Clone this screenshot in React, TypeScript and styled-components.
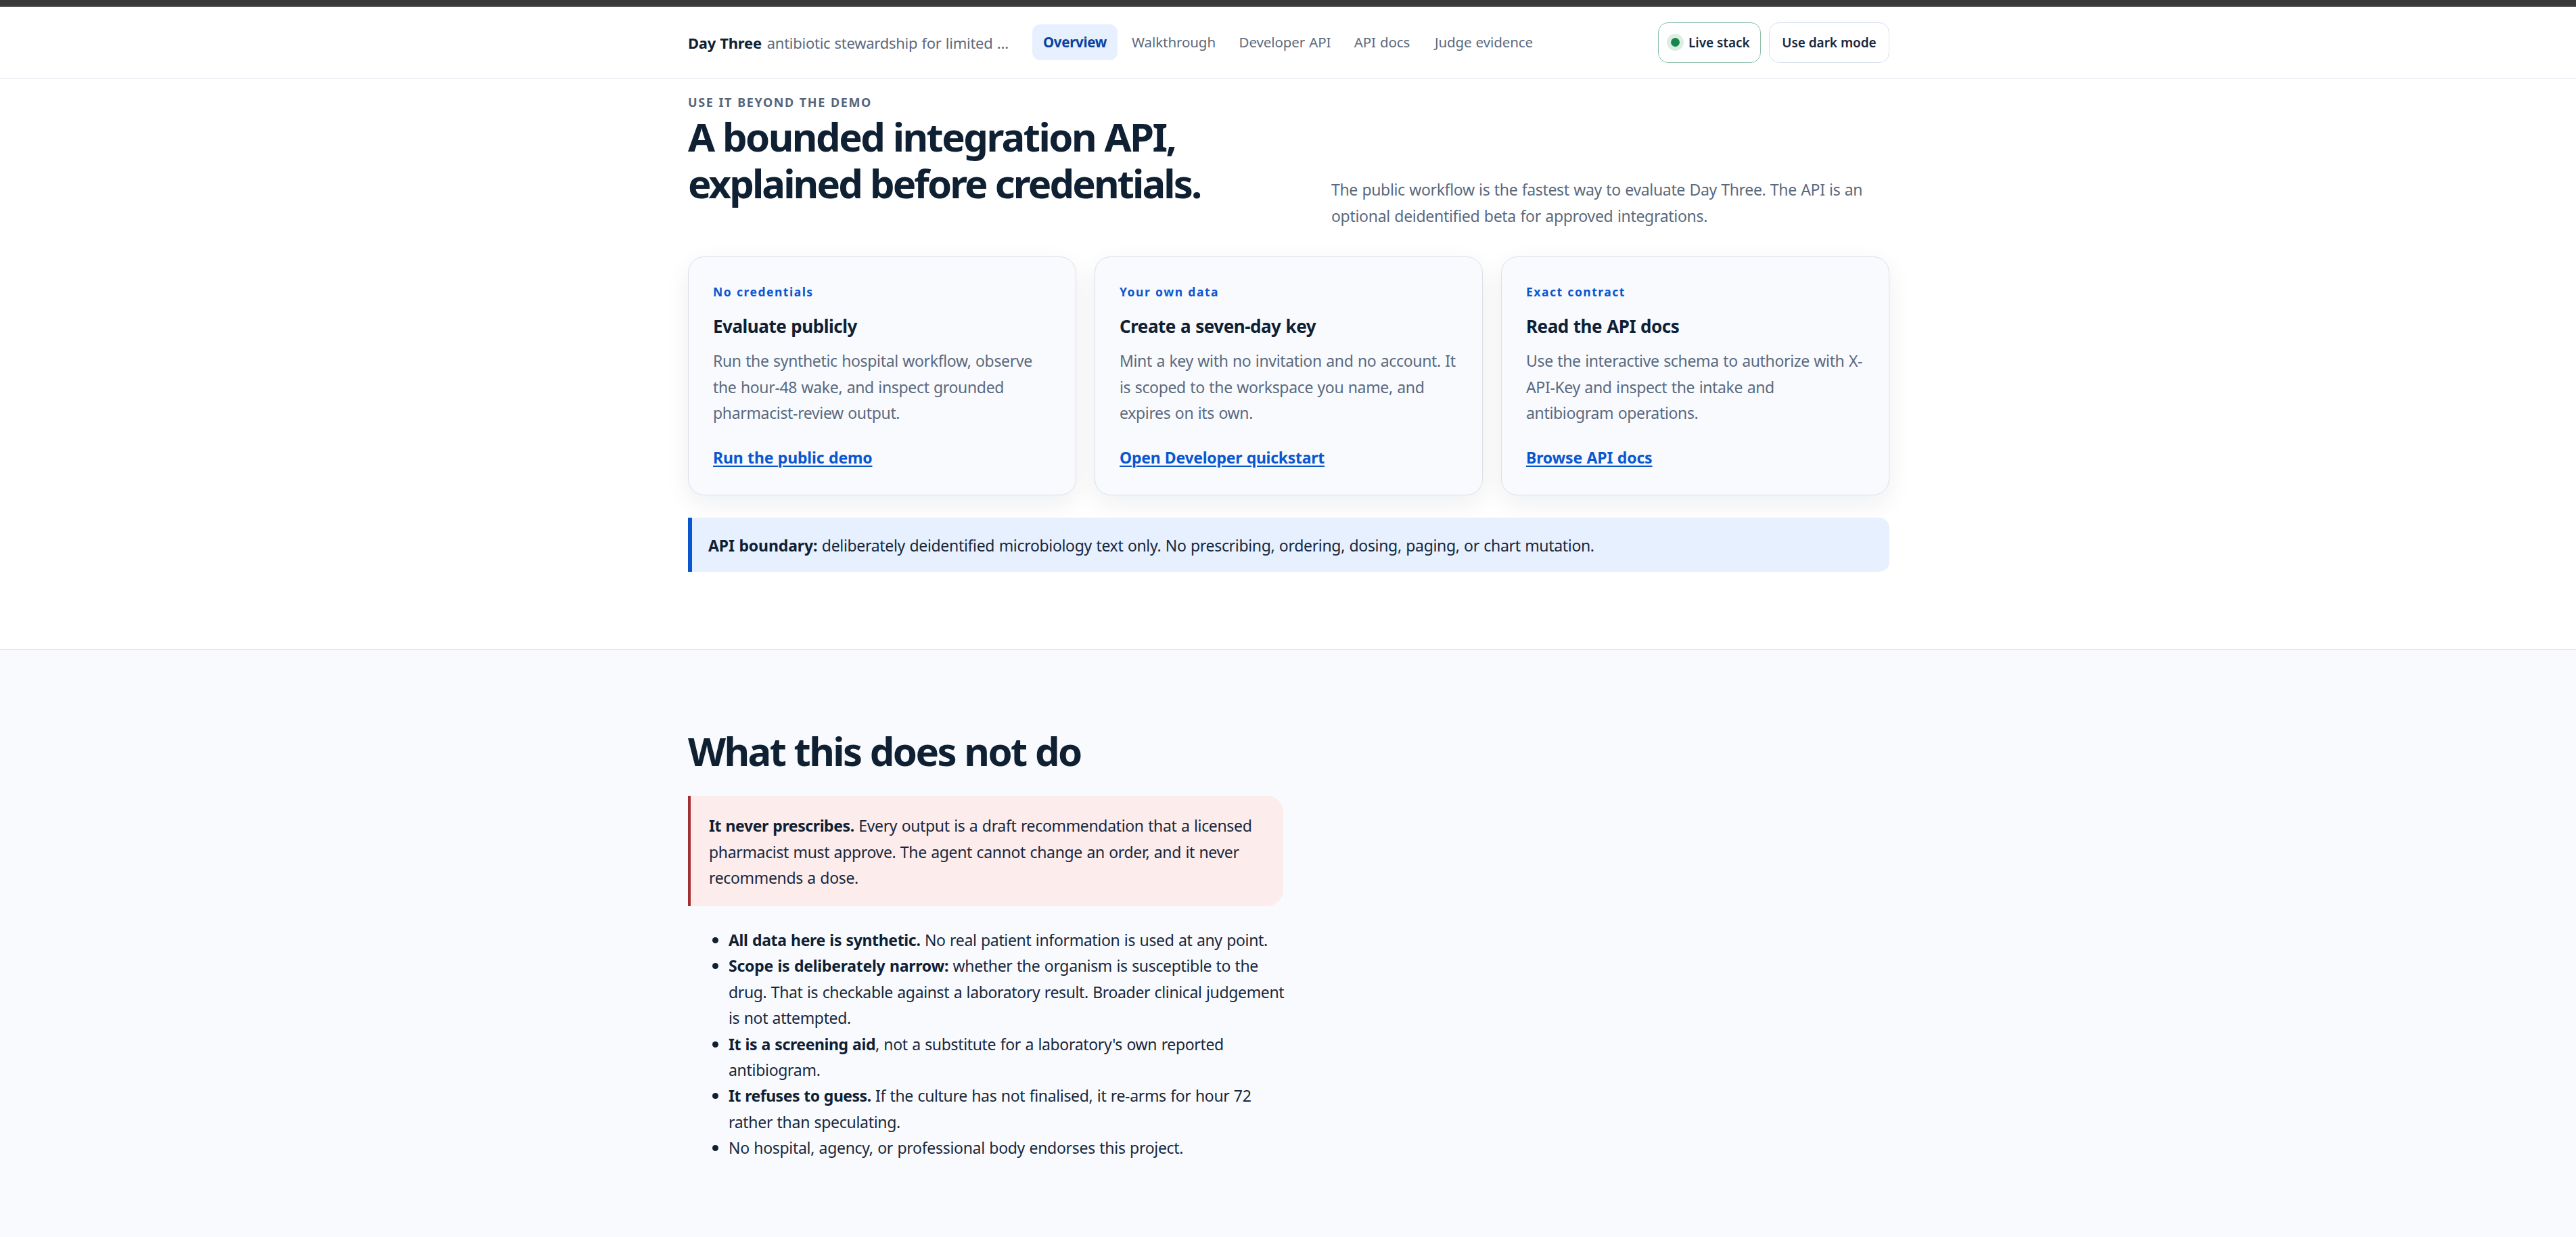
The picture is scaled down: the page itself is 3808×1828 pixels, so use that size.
import React from "react";
import styled, { createGlobalStyle } from "styled-components";

const ink = "#0f2033";
const body = "#17273b";
const muted = "#5a697d";
const blue = "#0a56cf";
const line = "#d9e0ea";
const tint = "#f8fafe";

const GlobalStyle = createGlobalStyle`
  * { box-sizing: border-box; }
  html, body { margin: 0; padding: 0; background: #fff; overflow: hidden; }
  body {
    font-family: "Noto Sans", "Open Sans", sans-serif;
    font-size: 23px;
    line-height: 38.4px;
    word-spacing: 0.8px;
    color: ${body};
  }
  h2, h3, p, ul { margin: 0; padding: 0; }
`;

const Page = styled.div`
  display: flex;
  flex-direction: column;
  height: 1828px;
  overflow: hidden;
`;

const TopStrip = styled.div`
  flex: none;
  height: 10px;
  background: #3a3a3a;
  border-bottom: 2px solid #444;
`;

const Header = styled.header`
  flex: none;
  height: 106px;
  background: #fff;
  border-bottom: 1px solid ${line};
`;

const Wrap = styled.div`
  width: 1776px;
  margin: 0 auto;
  position: relative;
  left: 1px;
`;

const HeaderRow = styled(Wrap)`
  height: 105px;
  display: flex;
  align-items: center;
`;

const Brand = styled.div`
  width: 476px;
  margin-right: 33px;
  padding-top: 1px;
  display: flex;
  gap: 8px;
  font-size: 22px;
  color: ${muted};
  white-space: nowrap;
`;

const Run = styled.span<{ $ls?: number }>`
  letter-spacing: ${(p) => p.$ls ?? -0.34}px;
`;

const Strong = styled.strong<{ $ls?: number }>`
  font-weight: 700;
  color: ${ink};
  letter-spacing: ${(p) => p.$ls ?? -0.4}px;
`;

const Nav = styled.nav`
  display: flex;
  gap: 6px;
`;

const NavLink = styled.a<{ $active?: boolean; $w: number; $ls?: number }>`
  width: ${(p) => p.$w}px;
  height: 53px;
  display: flex;
  align-items: center;
  justify-content: center;
  border-radius: 12px;
  font-size: 20.5px;
  white-space: nowrap;
  letter-spacing: ${(p) => p.$ls ?? -0.08}px;
  font-weight: ${(p) => (p.$active ? 700 : 400)};
  color: ${(p) => (p.$active ? "#0842a0" : muted)};
  background: ${(p) => (p.$active ? "#e6f0ff" : "transparent")};
`;

const Actions = styled.div`
  margin-left: auto;
  display: flex;
  gap: 12px;
`;

const Button = styled.button<{ $w: number; $live?: boolean }>`
  width: ${(p) => p.$w}px;
  height: 60px;
  padding: 0 0 0 ${(p) => (p.$live ? 18 : 0)}px;
  display: flex;
  align-items: center;
  justify-content: ${(p) => (p.$live ? "flex-start" : "center")};
  gap: 13px;
  background: #fff;
  border: 1px solid ${(p) => (p.$live ? "#8bbfa6" : "#d8e0ee")};
  border-radius: 15px;
  font-family: inherit;
  font-size: 19px;
  font-weight: 600;
  letter-spacing: -0.05px;
  color: ${body};
  white-space: nowrap;
`;

const Dot = styled.span`
  width: 13px;
  height: 13px;
  flex: none;
  border-radius: 50%;
  background: #188649;
  box-shadow: 0 0 0 6px #dceee4;
`;

const ApiSection = styled.section`
  flex: none;
  height: 843px;
  padding-top: 21.2px;
`;

const Intro = styled.div`
  display: grid;
  grid-template-columns: 951px 1fr;
  align-items: end;
  height: 201px;
`;

const IntroText = styled.div`
  align-self: start;
`;

const Eyebrow = styled.p`
  font-size: 18px;
  line-height: 28px;
  font-weight: 700;
  letter-spacing: 1.6px;
  color: #56657a;
  margin-bottom: 2px;
`;

const Heading = styled.h2`
  font-size: 58px;
  line-height: 69px;
  font-weight: 700;
  letter-spacing: -2.6px;
  color: ${ink};
  white-space: nowrap;
`;

const Lead = styled.p`
  color: ${muted};
  white-space: nowrap;
`;

const Cards = styled.div`
  display: grid;
  grid-template-columns: repeat(3, 1fr);
  gap: 27px;
  margin-top: 41px;
`;

const Card = styled.article`
  height: 353px;
  padding: 37px 0 0 36px;
  background: ${tint};
  border: 1px solid ${line};
  border-radius: 24px;
  box-shadow: 0 12px 36px rgba(15, 32, 51, 0.07);
  white-space: nowrap;
`;

const CardLabel = styled.p`
  font-size: 17.5px;
  line-height: 28px;
  font-weight: 700;
  letter-spacing: 1.5px;
  color: ${blue};
  margin-bottom: 18px;
`;

const CardTitle = styled.h3`
  font-size: 26px;
  line-height: 38px;
  font-weight: 700;
  letter-spacing: -0.47px;
  color: ${ink};
  margin-bottom: 13px;
`;

const CardText = styled.p`
  color: ${muted};
  margin-bottom: 27.6px;
`;

const CardLink = styled.a<{ $ls: number }>`
  font-weight: 700;
  letter-spacing: ${(p) => p.$ls}px;
  color: ${blue};
  text-decoration: underline;
  text-decoration-thickness: 2px;
  text-underline-offset: 3px;
`;

const Notice = styled.p`
  && { margin-top: 33px; padding: 22px 0 0 24px; }
  height: 80px;
  background: #e6f0ff;
  border-left: 6px solid ${blue};
  border-radius: 0 15px 15px 0;
  white-space: nowrap;
  position: relative;
`;

const LimitsSection = styled.section`
  flex: 1;
  background: ${tint};
  border-top: 1px solid ${line};
  padding-top: 115.4px;
`;

const Warning = styled.p`
  && { margin-top: 31.6px; padding: 25.2px 0 0 27px; }
  width: 880px;
  height: 163px;
  background: #fdecec;
  border-left: 4px solid #a12e32;
  border-radius: 0 24px 24px 0;
  white-space: nowrap;
`;

const List = styled.ul`
  && { margin-top: 30.9px; }
  list-style: none;
  white-space: nowrap;
`;

const Item = styled.li`
  display: grid;
  grid-template-columns: 9px 1fr;
  column-gap: 15px;
  padding-left: 36px;
  &::before {
    content: "";
    width: 9px;
    height: 9px;
    margin-top: 15px;
    border-radius: 50%;
    background: ${ink};
  }
`;

type Line = [text: string, ls?: number];

const Lines = ({ rows }: { rows: Line[] }) => (
  <>
    {rows.map(([text, ls], i) => (
      <React.Fragment key={i}>
        {i > 0 && <br />}
        <Run $ls={ls}>{text}</Run>
      </React.Fragment>
    ))}
  </>
);

const nav: { label: string; w: number; ls?: number; active?: boolean }[] = [
  { label: "Overview", w: 126, ls: -0.3, active: true },
  { label: "Walkthrough", w: 154 },
  { label: "Developer API", w: 163 },
  { label: "API docs", w: 112 },
  { label: "Judge evidence", w: 177 },
];

const cards: { label: string; title: string; text: Line[]; link: Line }[] = [
  {
    label: "No credentials",
    title: "Evaluate publicly",
    text: [["Run the synthetic hospital workflow, observe"], ["the hour-48 wake, and inspect grounded"], ["pharmacist-review output."]],
    link: ["Run the public demo", -0.17],
  },
  {
    label: "Your own data",
    title: "Create a seven-day key",
    text: [["Mint a key with no invitation and no account. It"], ["is scoped to the workspace you name, and"], ["expires on its own."]],
    link: ["Open Developer quickstart", -0.27],
  },
  {
    label: "Exact contract",
    title: "Read the API docs",
    text: [["Use the interactive schema to authorize with X-"], ["API-Key and inspect the intake and"], ["antibiogram operations."]],
    link: ["Browse API docs", -0.17],
  },
];

const limits: { lead?: Line; text: Line[] }[] = [
  { lead: ["All data here is synthetic.", -0.35], text: [[" No real patient information is used at any point."]] },
  {
    lead: ["Scope is deliberately narrow:", -0.25],
    text: [[" whether the organism is susceptible to the"], ["drug. That is checkable against a laboratory result. Broader clinical judgement", -0.36], ["is not attempted."]],
  },
  { lead: ["It is a screening aid"], text: [[", not a substitute for a laboratory's own reported"], ["antibiogram.", -0.3]] },
  { lead: ["It refuses to guess.", -0.5], text: [[" If the culture has not finalised, it re-arms for hour 72"], ["rather than speculating.", -0.3]] },
  { text: [["No hospital, agency, or professional body endorses this project.", -0.3]] },
];

export default function App() {
  return (
    <Page>
      <GlobalStyle />
      <TopStrip />
      <Header>
        <HeaderRow>
          <Brand>
            <Strong $ls={-0.25}>Day Three</Strong>
            <Run $ls={-0.27}>antibiotic stewardship for limited …</Run>
          </Brand>
          <Nav>
            {nav.map((n) => (
              <NavLink key={n.label} $active={n.active} $w={n.w} $ls={n.ls}>
                {n.label}
              </NavLink>
            ))}
          </Nav>
          <Actions>
            <Button $w={152} $live>
              <Dot />
              Live stack
            </Button>
            <Button $w={178}>Use dark mode</Button>
          </Actions>
        </HeaderRow>
      </Header>

      <ApiSection>
        <Wrap>
          <Intro>
            <IntroText>
              <Eyebrow>USE IT BEYOND THE DEMO</Eyebrow>
              <Heading>
                <Lines
                  rows={[
                    ["A bounded integration API,", -2.55],
                    ["explained before credentials.", -2.9],
                  ]}
                />
              </Heading>
            </IntroText>
            <Lead>
              <Lines
                rows={[
                  ["The public workflow is the fastest way to evaluate Day Three. The API is an"],
                  ["optional deidentified beta for approved integrations.", -0.3],
                ]}
              />
            </Lead>
          </Intro>
          <Cards>
            {cards.map((c) => (
              <Card key={c.title}>
                <CardLabel>{c.label}</CardLabel>
                <CardTitle>{c.title}</CardTitle>
                <CardText>
                  <Lines rows={c.text} />
                </CardText>
                <CardLink $ls={c.link[1] ?? 0}>{c.link[0]}</CardLink>
              </Card>
            ))}
          </Cards>
          <Notice>
            <Strong $ls={-0.12}>API boundary:</Strong>
            <Run $ls={-0.32}> deliberately deidentified microbiology text only. No prescribing, ordering, dosing, paging, or chart mutation.</Run>
          </Notice>
        </Wrap>
      </ApiSection>

      <LimitsSection>
        <Wrap>
          <Heading>What this does not do</Heading>
          <Warning>
            <Strong>It never prescribes.</Strong>
            <Lines
              rows={[
                [" Every output is a draft recommendation that a licensed"],
                ["pharmacist must approve. The agent cannot change an order, and it never"],
                ["recommends a dose."],
              ]}
            />
          </Warning>
          <List>
            {limits.map((l, i) => (
              <Item key={i}>
                <div>
                  {l.lead && <Strong $ls={l.lead[1]}>{l.lead[0]}</Strong>}
                  <Lines rows={l.text} />
                </div>
              </Item>
            ))}
          </List>
        </Wrap>
      </LimitsSection>
    </Page>
  );
}
